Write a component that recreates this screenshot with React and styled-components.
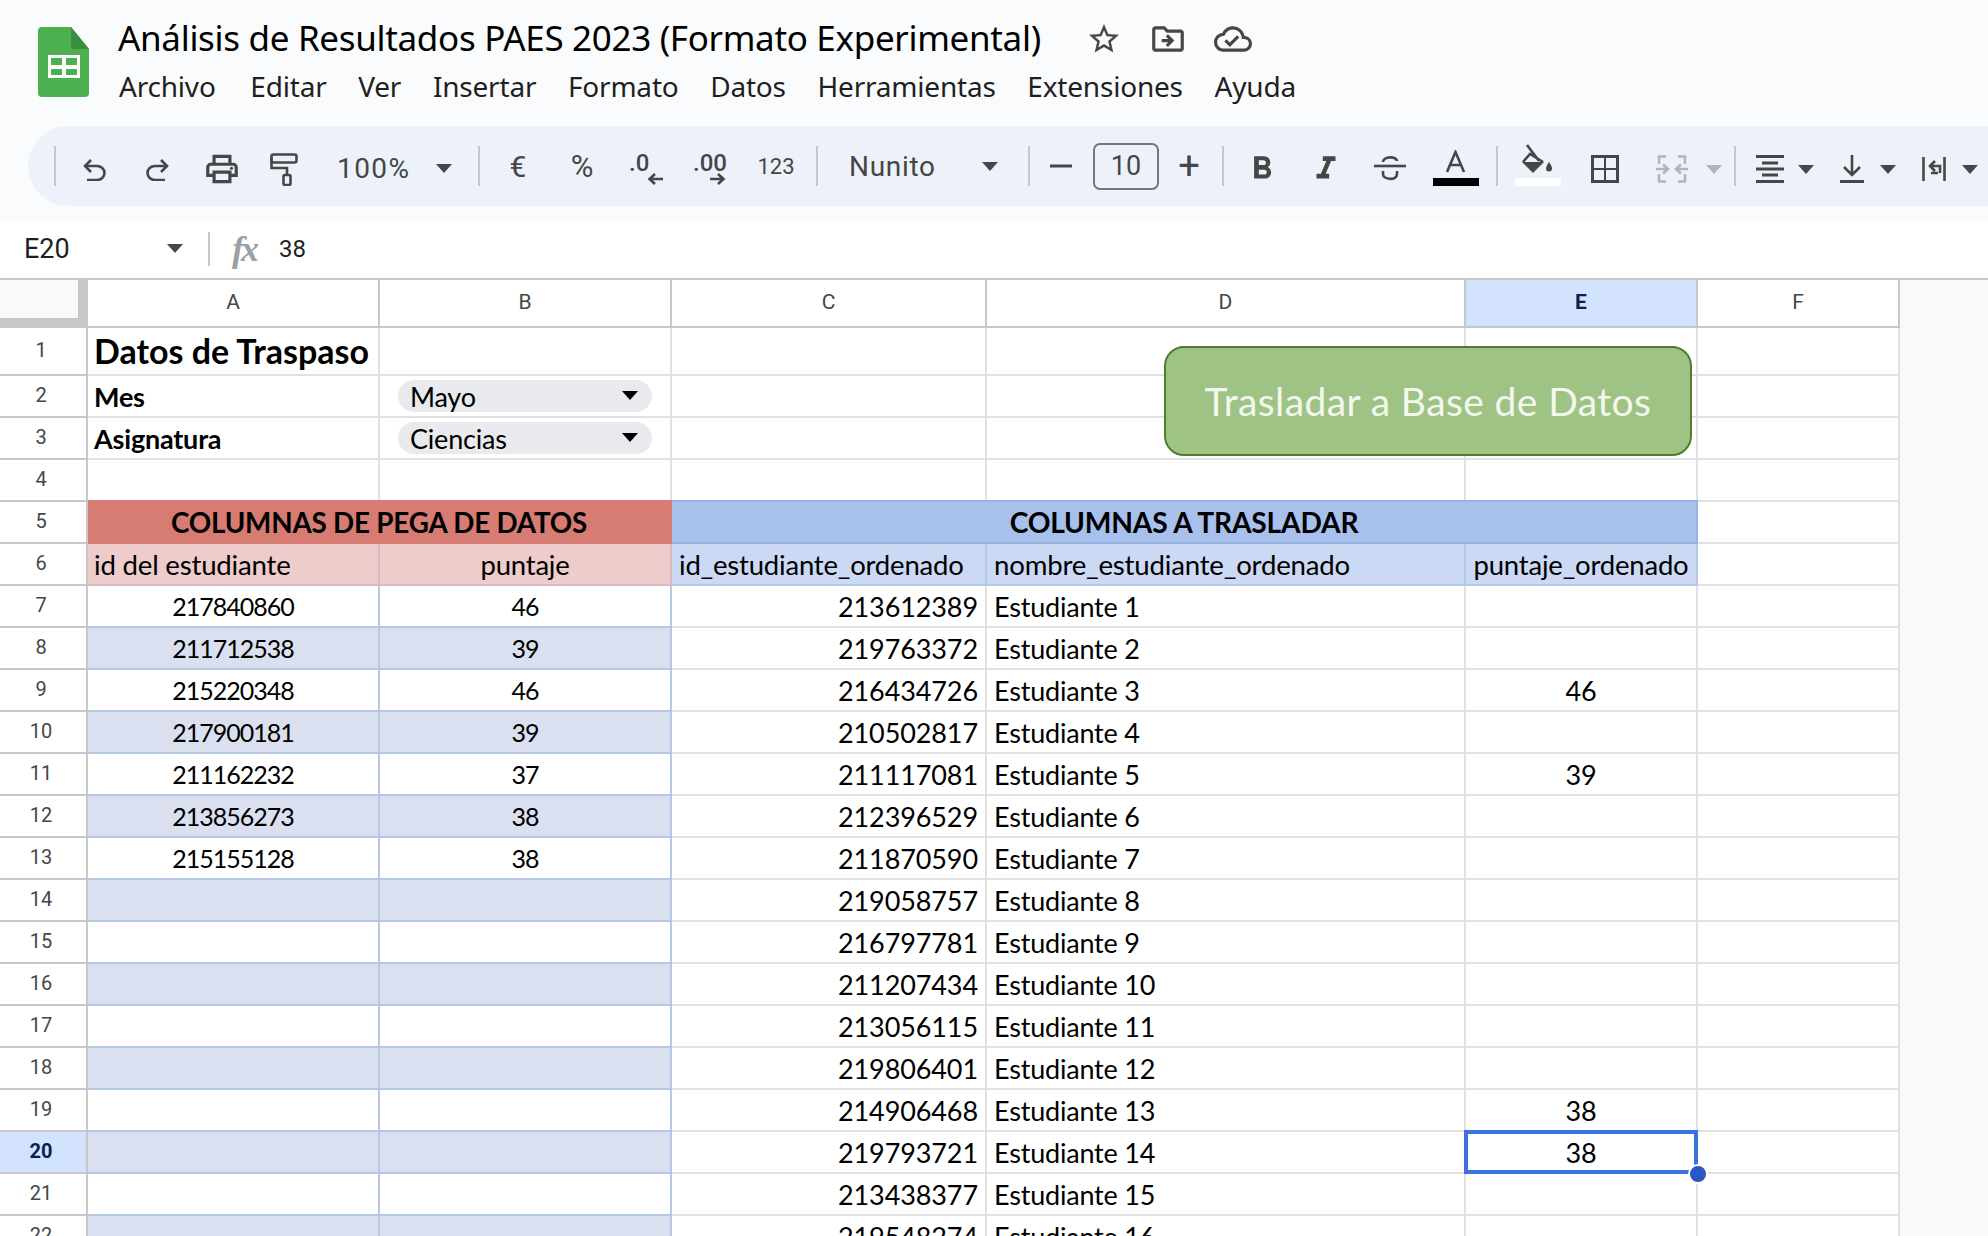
import styled, { createGlobalStyle } from "styled-components";
import {
    MdOutlinePrint,
    MdStarBorder,
    MdOutlineDriveFileMove,
    MdOutlineCloudDone,
    MdFormatBold,
    MdFormatItalic,
} from "react-icons/md";

const GlobalStyle = createGlobalStyle`
    html, body {
        margin: 0;
        padding: 0;
        height: 1236px;
        overflow: hidden;
        background: #fff;
    }
    * { box-sizing: border-box; }
`;

const ICON = "#444746";
const CELL_FONT = `"Lato", "Noto Sans", sans-serif`;
const UI_FONT = `"Roboto", "Liberation Sans", sans-serif`;

const Page = styled.div`
    width: 1988px;
    height: 1236px;
    overflow: hidden;
`;

const Header = styled.header`
    height: 222px;
    background: #f9fbfd;
    overflow: hidden;
`;

const TopArea = styled.div`
    height: 126px;
    display: flex;
    padding: 27px 0 0 38px;
`;

const TitleColumn = styled.div`
    margin-left: 29px;
    margin-top: -10px;
`;

const TitleRow = styled.div`
    display: flex;
    align-items: center;
    height: 40px;
`;

const Title = styled.h1`
    margin: 0;
    font: 400 35px "Noto Sans", sans-serif;
    letter-spacing: -0.32px;
    color: #000;
    white-space: nowrap;
    width: 968px;
`;

const TitleIcons = styled.div`
    display: flex;
    align-items: center;
    gap: 27px;
    color: ${ICON};
    padding-top: 4px;
`;

const Menu = styled.nav`
    display: flex;
    gap: 31.7px;
    margin-top: 10px;
    margin-left: 1px;
    font: 400 28px "Noto Sans", sans-serif;
    letter-spacing: -0.2px;
    color: #1f1f1f;

    span:first-child {
        margin-right: 3px;
    }
`;

const Toolbar = styled.div`
    height: 80px;
    margin-left: 28px;
    padding-left: 26px;
    display: flex;
    align-items: center;
    background: #edf2fa;
    border-radius: 40px 0 0 40px;
    font-family: ${UI_FONT};
    color: ${ICON};
`;

const Sep = styled.span`
    flex: none;
    width: 2px;
    height: 40px;
    background: #c7c7c7;
    margin-left: ${(p) => p.$ml || 0}px;
`;

const Tool = styled.span`
    flex: none;
    width: ${(p) => p.$w}px;
    height: 80px;
    padding: ${(p) => p.$top ?? 6}px 0 ${(p) => p.$bottom || 0}px;
    display: flex;
    align-items: center;
    justify-content: center;
    font-size: ${(p) => p.$size || 26}px;
`;

const Picker = styled.span`
    flex: none;
    width: ${(p) => p.$w}px;
    padding: ${(p) => p.$top || 0}px ${(p) => p.$right}px 0 ${(p) => p.$left}px;
    display: flex;
    align-items: center;
    justify-content: space-between;
    font-size: 28px;
    letter-spacing: ${(p) => p.$track}px;
`;

const SizeBox = styled.span`
    flex: none;
    width: 66px;
    height: 47px;
    margin-left: 1px;
    border: 2px solid #747775;
    border-radius: 7px;
    display: flex;
    align-items: center;
    justify-content: center;
    font-size: 27px;
`;

const Split = styled.span`
    flex: none;
    display: flex;
    align-items: center;
    height: 80px;
    padding-top: 6px;
    margin-left: ${(p) => p.$ml}px;
    gap: ${(p) => p.$gap}px;
`;

const Caret = styled.span`
    flex: none;
    width: 0;
    height: 0;
    border-left: 8px solid transparent;
    border-right: 8px solid transparent;
    border-top: 9px solid ${(p) => p.$color || ICON};
`;

const FormulaBar = styled.div`
    height: 58px;
    display: flex;
    align-items: center;
    background: #fff;
    border-bottom: 2px solid #c7c7c7;
    font-family: ${UI_FONT};
    color: #1f1f1f;
    font-size: 24px;
    padding-bottom: 3px;
`;

const NameBox = styled.div`
    width: 208px;
    padding: 0 25px 0 24px;
    display: flex;
    align-items: center;
    justify-content: space-between;
    font-size: 27px;
`;

const BarSep = styled.span`
    width: 2px;
    height: 34px;
    background: #c7c7c7;
`;

const FxMark = styled.span`
    margin-left: 22px;
    width: 47px;
    font: italic 700 36px "Liberation Serif", serif;
    color: #9aa0a6;
    letter-spacing: -3px;
`;

const Sheet = styled.div`
    position: relative;
    display: grid;
    grid-template-columns: 88px 292px 292px 315px 479px 232px 202px 1fr;
    grid-template-rows: 48px 48px repeat(21, 42px);
    background: #f8faf8;
`;

const Corner = styled.div`
    background: #f8f9fa;
    border-right: 10px solid #c7c7c7;
    border-bottom: 10px solid #c7c7c7;
`;

const ColHead = styled.div`
    display: flex;
    align-items: center;
    justify-content: center;
    padding-bottom: 2px;
    background: ${(p) => (p.$active ? "#d3e3fd" : "#fff")};
    color: ${(p) => (p.$active ? "#0b1f4f" : "#444746")};
    font: ${(p) => (p.$active ? 700 : 400)} 21px ${UI_FONT};
    border-right: 2px solid #c7c7c7;
    border-bottom: 2px solid #c7c7c7;
`;

const RowHead = styled.div`
    display: flex;
    align-items: center;
    justify-content: center;
    padding: 0 4px 3px 0;
    grid-column: 1;
    background: ${(p) => (p.$active ? "#d3e3fd" : "#fff")};
    color: ${(p) => (p.$active ? "#0b1f4f" : "#444746")};
    font: ${(p) => (p.$active ? 700 : 400)} 20px ${UI_FONT};
    border-right: 2px solid #c7c7c7;
    border-bottom: 2px solid #c7c7c7;
`;

const Cell = styled.div`
    position: relative;
    display: flex;
    align-items: center;
    justify-content: ${(p) => p.$align || "flex-start"};
    grid-column: ${(p) => (p.$span ? `span ${p.$span}` : "auto")};
    padding: 0 7px 0 7px;
    background: ${(p) => p.$bg || "#fff"};
    border-right: 2px solid ${(p) => p.$line || "#e1e1e1"};
    border-bottom: 2px solid ${(p) => p.$line || "#e1e1e1"};
    font: ${(p) => (p.$bold ? 700 : 400)} ${(p) => p.$size || 27}px ${CELL_FONT};
    letter-spacing: ${(p) => p.$track ?? -0.2}px;
    color: #000;
    white-space: nowrap;
`;

const LabelCell = styled(Cell)`
    padding-left: 6px;
`;

const SheetTitle = styled(LabelCell)`
    padding-bottom: 2px;
`;

const BandTitle = styled(Cell)`
    margin-top: -2px;
    border-top: 2px solid ${(p) => p.$line};
`;

const DropCell = styled(Cell)`
    align-items: flex-start;
    padding: 4px 18px 0 18px;
`;

const Chip = styled.div`
    width: 100%;
    height: 32px;
    padding: 0 14px 0 12px;
    display: flex;
    align-items: center;
    justify-content: space-between;
    background: #e8eaed;
    border-radius: 16px;
`;

const ChipCaret = styled(Caret)`
    border-top-color: #000;
    margin-top: -2px;
`;

const Selection = styled.div`
    position: absolute;
    inset: -2px;
    border: 4px solid #3b72e0;
    z-index: 2;
`;

const Handle = styled.div`
    position: absolute;
    right: -14px;
    bottom: -14px;
    width: 20px;
    height: 20px;
    border-radius: 50%;
    background: #2a56c6;
    border: 2px solid #fff;
    z-index: 3;
`;

const SheetButton = styled.div`
    position: absolute;
    left: 1164px;
    top: 66px;
    width: 528px;
    height: 110px;
    display: flex;
    align-items: center;
    justify-content: center;
    background: #9ec384;
    border: 2px solid #4f7f2e;
    border-radius: 20px;
    color: #f3f8ee;
    font: 400 39px ${CELL_FONT};
    letter-spacing: 0.4px;
    z-index: 1;
`;

// Hoja de cálculo: el logo y los iconos propios de la barra
const SheetsLogo = () => (
    <svg width="51" height="70" viewBox="0 0 51 70">
        <path d="M4 0H33L51 22V66a4 4 0 0 1-4 4H4a4 4 0 0 1-4-4V4a4 4 0 0 1 4-4Z" fill="#4caf50" />
        <path d="M33 0L51 22H33Z" fill="#388e3c" />
        <path fillRule="evenodd" d="M10 28H42V51H10ZM13 31V38H24V31ZM28 31V38H39V31ZM13 42V48H24V42ZM28 42V48H39V42Z" fill="#fff" />
    </svg>
);

const Stroke = ({ w, h, children, color = ICON, sw = 2.6 }) => (
    <svg width={w} height={h} viewBox={`0 0 ${w} ${h}`} fill="none" stroke={color} strokeWidth={sw}>
        {children}
    </svg>
);

const UndoIcon = () => (
    <Stroke w={24} h={23}>
        <path d="M9 2L3 8L9 14" />
        <path d="M3 8H15a7.5 7 0 0 1 0 14H5" />
    </Stroke>
);

const RedoIcon = () => (
    <Stroke w={24} h={23}>
        <path d="M15 2L21 8L15 14" />
        <path d="M21 8H9a7.5 7 0 0 0 0 14H19" />
    </Stroke>
);

const RollerIcon = () => (
    <Stroke w={28} h={33}>
        <rect x="1.5" y="1.5" width="25" height="8" rx="2" />
        <path d="M1.5 5V15H17V22" />
        <rect x="13.5" y="22" width="7" height="10" rx="1.5" />
    </Stroke>
);

const DecreaseIcon = () => (
    <svg width="36" height="38" viewBox="0 -6 36 38">
        <text x="0" y="18" fontFamily="Roboto" fontWeight="500" fontSize="24" fill={ICON}>.0</text>
        <path d="M34 26H21M26 21L20.5 26L26 31" fill="none" stroke={ICON} strokeWidth="2.6" />
    </svg>
);

const IncreaseIcon = () => (
    <svg width="38" height="38" viewBox="0 -6 38 38">
        <text x="0" y="18" fontFamily="Roboto" fontWeight="500" fontSize="24" fill={ICON}>.00</text>
        <path d="M17 26H30M25 21L30.5 26L25 31" fill="none" stroke={ICON} strokeWidth="2.6" />
    </svg>
);

const MinusIcon = () => (
    <Stroke w={22} h={4} sw={3}>
        <path d="M0 2H22" />
    </Stroke>
);

const StrikeIcon = () => (
    <Stroke w={32} h={30}>
        <path d="M0 13H32" />
        <path d="M9 9C9 3 23 3 23 8" />
        <path d="M9 18V21C9 27 23 28 23 21V18" />
    </Stroke>
);

const TextColorIcon = () => (
    <svg width="46" height="36" viewBox="0 0 46 36">
        <path d="M14 22L22.5 2L31 22M17 15H28" fill="none" stroke={ICON} strokeWidth="2.6" />
        <rect y="28" width="46" height="8" fill="#000" />
    </svg>
);

const FillIcon = () => (
    <svg width="46" height="44" viewBox="0 0 46 44">
        <path d="M12 3L24 19M8 20L15 12L28 20" fill="none" stroke={ICON} strokeWidth="2.6" />
        <path d="M7 20H29L18 31Z" fill={ICON} />
        <path d="M34 20c2 3 3 5 3 6.500a3 3 0 0 1-6 0c0-1.500 1-3.500 3-6.500Z" fill={ICON} />
        <rect y="36" width="46" height="8" fill="#fff" />
    </svg>
);

const BordersIcon = () => (
    <svg width="28" height="28" viewBox="0 0 28 28" fill="none" stroke={ICON}>
        <rect x="1.5" y="1.5" width="25" height="25" strokeWidth="3" />
        <path d="M14 2V26M2 14H26" strokeWidth="2" />
    </svg>
);

const MergeIcon = () => (
    <Stroke w={32} h={28} color="#b1b5b9">
        <path d="M10 1.5H3V9M22 1.500H29V9M10 26.500H3V19M22 26.500H29V19" />
        <path d="M0 14H11M7 9.500L12 14L7 18.500M32 14H21M25 9.500L20 14L25 18.500" />
    </Stroke>
);

const AlignIcon = () => (
    <Stroke w={28} h={28} sw={3}>
        <path d="M0 1.5H28M6 8H22M0 14H28M6 20H22M0 26.500H28" />
    </Stroke>
);

const ValignIcon = () => (
    <Stroke w={24} h={28}>
        <path d="M12 0V20M4 12L12 20L20 12" />
        <path d="M0 26.500H24" strokeWidth="3" />
    </Stroke>
);

const WrapIcon = () => (
    <Stroke w={24} h={26}>
        <path d="M1.5 1V25M22.500 1V25" />
        <path d="M18 17V10H8M13 5L8 10L13 15M16 17H9" />
    </Stroke>
);

const paste = [
    ["217840860", "46"],
    ["211712538", "39"],
    ["215220348", "46"],
    ["217900181", "39"],
    ["211162232", "37"],
    ["213856273", "38"],
    ["215155128", "38"],
];

const ids = [
    "213612389", "219763372", "216434726", "210502817", "211117081",
    "212396529", "211870590", "219058757", "216797781", "211207434",
    "213056115", "219806401", "214906468", "219793721", "213438377",
    "219548274",
];

const scores = { 9: "46", 11: "39", 19: "38", 20: "38" };

const BAND_LINE = "#b7c8e6";

const DataRow = ({ row, index }) => {
    const [id, score] = paste[index] || ["", ""];
    const shaded = row % 2 === 0;
    const bg = shaded ? "#dbe0f0" : "#fff";
    return (
        <>
            <RowHead $active={row === 20}>{row}</RowHead>
            <Cell $align="center" $bg={bg} $line={BAND_LINE} $size={25} $track={-1}>{id}</Cell>
            <Cell $align="center" $bg={bg} $line={BAND_LINE} $size={25} $track={-1}>{score}</Cell>
            <Cell $align="flex-end" $track={-0.1}>{ids[index]}</Cell>
            <Cell>Estudiante {index + 1}</Cell>
            <Cell $align="center">
                {scores[row]}
                {row === 20 && (
                    <Selection>
                        <Handle />
                    </Selection>
                )}
            </Cell>
            <Cell />
        </>
    );
};

const App = () => (
    <Page>
        <GlobalStyle />
        <Header>
            <TopArea>
                <SheetsLogo />
                <TitleColumn>
                    <TitleRow>
                        <Title>Análisis de Resultados PAES 2023 (Formato Experimental)</Title>
                        <TitleIcons>
                            <MdStarBorder size={36} />
                            <MdOutlineDriveFileMove size={38} />
                            <MdOutlineCloudDone size={38} />
                        </TitleIcons>
                    </TitleRow>
                    <Menu>
                        {["Archivo", "Editar", "Ver", "Insertar", "Formato", "Datos", "Herramientas", "Extensiones", "Ayuda"].map((item) => (
                            <span key={item}>{item}</span>
                        ))}
                    </Menu>
                </TitleColumn>
            </TopArea>
            <Toolbar>
                <Sep />
                <Tool $w={76}><UndoIcon /></Tool>
                <Tool $w={52}><RedoIcon /></Tool>
                <Tool $w={76}><MdOutlinePrint size={38} /></Tool>
                <Tool $w={48}><RollerIcon /></Tool>
                <Picker $w={170} $left={29} $right={26} $top={4} $track={1.4}>100%<Caret /></Picker>
                <Sep />
                <Tool $w={76} $top={0} $size={30}>€</Tool>
                <Tool $w={52} $top={0} $size={31}>%</Tool>
                <Tool $w={78} $top={0}><DecreaseIcon /></Tool>
                <Tool $w={51} $top={0}><IncreaseIcon /></Tool>
                <Tool $w={78} $top={0} $size={22}>123</Tool>
                <Sep $ml={1} />
                <Picker $w={210} $left={31} $right={30} $track={0.7}>Nunito<Caret /></Picker>
                <Sep />
                <Tool $w={62} $top={0}><MinusIcon /></Tool>
                <SizeBox>10</SizeBox>
                <Tool $w={60} $top={0} $size={38}>+</Tool>
                <Sep $ml={3} />
                <Tool $w={76}><MdFormatBold size={38} /></Tool>
                <Tool $w={52}><MdFormatItalic size={38} /></Tool>
                <Tool $w={76} $top={4}><StrikeIcon /></Tool>
                <Tool $w={56} $top={4}><TextColorIcon /></Tool>
                <Sep $ml={12} />
                <Tool $w={79} $top={0} $bottom={4}><FillIcon /></Tool>
                <Tool $w={56}><BordersIcon /></Tool>
                <Split $ml={23} $gap={18}><MergeIcon /><Caret $color="#b1b5b9" /></Split>
                <Sep $ml={12} />
                <Split $ml={20} $gap={14}><AlignIcon /><Caret /></Split>
                <Split $ml={26} $gap={16}><ValignIcon /><Caret /></Split>
                <Split $ml={26} $gap={16}><WrapIcon /><Caret /></Split>
            </Toolbar>
        </Header>
        <FormulaBar>
            <NameBox>E20<Caret /></NameBox>
            <BarSep />
            <FxMark>fx</FxMark>
            <span>38</span>
        </FormulaBar>
        <Sheet>
            <Corner />
            {["A", "B", "C", "D", "E", "F"].map((col) => (
                <ColHead key={col} $active={col === "E"}>{col}</ColHead>
            ))}

            <RowHead>1</RowHead>
            <SheetTitle $bold $size={34} $track={0}>Datos de Traspaso</SheetTitle>
            <Cell /><Cell /><Cell /><Cell /><Cell />

            <RowHead>2</RowHead>
            <LabelCell $bold>Mes</LabelCell>
            <DropCell><Chip>Mayo<ChipCaret /></Chip></DropCell>
            <Cell /><Cell /><Cell /><Cell />

            <RowHead>3</RowHead>
            <LabelCell $bold>Asignatura</LabelCell>
            <DropCell><Chip>Ciencias<ChipCaret /></Chip></DropCell>
            <Cell /><Cell /><Cell /><Cell />

            <RowHead>4</RowHead>
            <Cell /><Cell /><Cell /><Cell /><Cell /><Cell />

            <RowHead>5</RowHead>
            <BandTitle $span={2} $align="center" $bold $size={27.8} $bg="#d67c72" $line="#d67c72">COLUMNAS DE PEGA DE DATOS</BandTitle>
            <BandTitle $span={3} $align="center" $bold $size={28.2} $bg="#a8c0ec" $line="#97b2e3">COLUMNAS A TRASLADAR</BandTitle>
            <Cell />

            <RowHead>6</RowHead>
            <LabelCell $bg="#edcccb" $line="#d8bcc4" $size={27.6}>id del estudiante</LabelCell>
            <Cell $align="center" $bg="#edcccb" $line="#d8bcc4" $size={27.5}>puntaje</Cell>
            <Cell $bg="#cbd9f4" $line={BAND_LINE} $size={27.5}>id_estudiante_ordenado</Cell>
            <Cell $bg="#cbd9f4" $line={BAND_LINE} $size={27.6}>nombre_estudiante_ordenado</Cell>
            <Cell $align="center" $bg="#cbd9f4" $line={BAND_LINE} $size={27.5}>puntaje_ordenado</Cell>
            <Cell />

            {ids.map((id, index) => (
                <DataRow key={id} row={index + 7} index={index} />
            ))}

            <SheetButton>Trasladar a Base de Datos</SheetButton>
        </Sheet>
    </Page>
);

export default App;
